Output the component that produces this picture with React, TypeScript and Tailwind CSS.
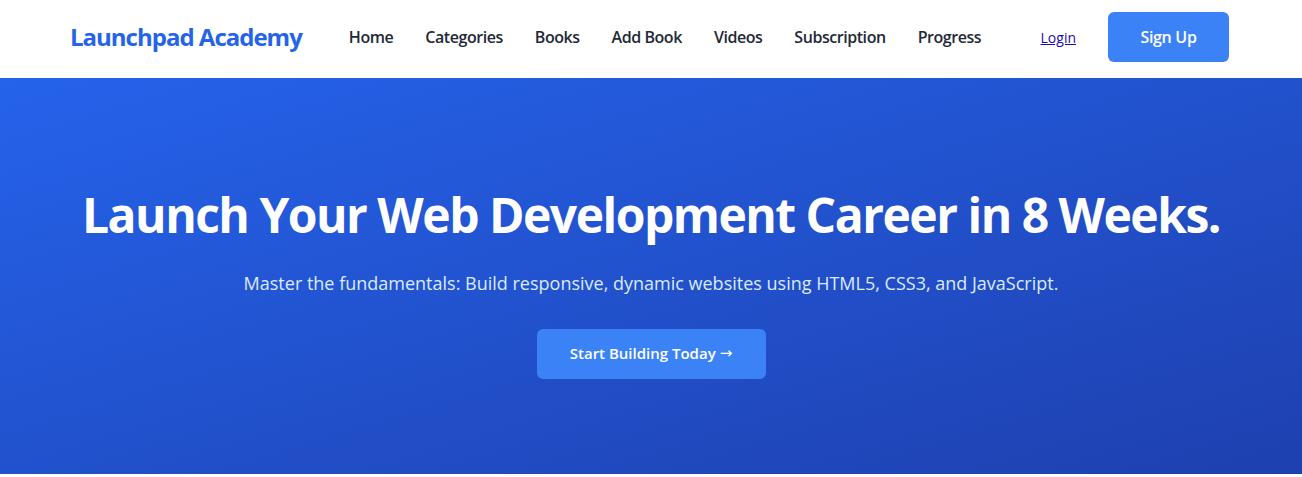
import React from "react";

const navItems = ["Home", "Categories", "Books", "Add Book", "Videos", "Subscription", "Progress"];

export default function App() {
  return (
    <div className="min-h-screen bg-white" style={{ fontFamily: '"Open Sans", "Noto Sans", sans-serif' }}>
      <header className="h-[78px] bg-white">
        <div className="flex h-full items-center pb-[4px] pl-[70px] pr-[73px]">
          <div className="text-[24px] font-bold tracking-[-1px] text-[#2563eb]">Launchpad Academy</div>
          <nav className="ml-[47px] flex items-center gap-[32px]">
            {navItems.map((item) => (
              <a key={item} className="text-[16px] font-semibold tracking-[-0.45px] text-[#1f2937]">
                {item}
              </a>
            ))}
          </nav>
          <a className="ml-auto text-[14px] text-[#1a0dab] underline">Login</a>
          <button className="ml-[32px] h-[50px] w-[121px] rounded-md bg-[#3b82f6] text-[16px] font-semibold tracking-[-0.3px] text-white">
            Sign Up
          </button>
        </div>
      </header>
      <section className="flex h-[396px] flex-col items-center bg-linear-to-br from-[#2563eb] to-[#1e40af] pt-[108px] text-center">
        <h1 className="text-[48px] font-bold leading-[1.2] tracking-[-1.5px] text-white">
          Launch Your Web Development Career in 8 Weeks.
        </h1>
        <p className="mt-[26px] text-[18px] leading-[27px] text-[#dbeafe]">
          Master the fundamentals: Build responsive, dynamic websites using HTML5, CSS3, and JavaScript.
        </p>
        <button className="mt-[32px] flex h-[50px] w-[229px] items-center justify-center gap-[4px] rounded-md bg-[#3b82f6] text-[15px] font-semibold text-white">
          <span>Start Building Today</span>
          <span className="font-['DejaVu_Sans',sans-serif] text-[15px] font-normal">→</span>
        </button>
      </section>
    </div>
  );
}
